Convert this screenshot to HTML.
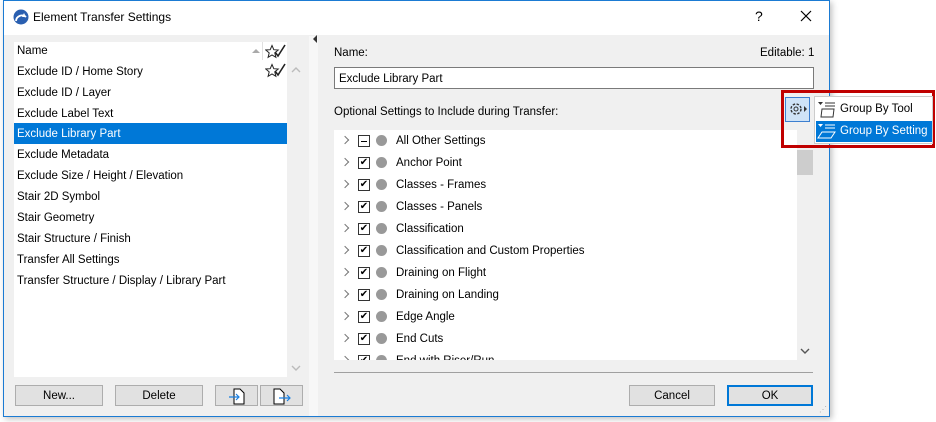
<!DOCTYPE html>
<html><head><style>
*{margin:0;padding:0;box-sizing:border-box}
body{width:936px;height:422px;background:#fff;font-family:"Liberation Sans",sans-serif;font-size:11.5px;color:#000;position:relative;overflow:hidden}
.a{position:absolute}
.dlg{left:3px;top:0;width:827px;height:417px;border:1px solid #1b7bd3;background:#f0f0f0;box-shadow:2px 2px 6px rgba(0,0,0,.25)}
.title{left:4px;top:1px;width:825px;height:34px;background:#fff}
.row{position:absolute;left:0;width:273px;height:21px;line-height:23px;padding-left:3px}
.btn{position:absolute;background:#e1e1e1;border:1px solid #adadad;text-align:center;line-height:21px;height:21px}
.tr{position:absolute;left:0;height:22px;width:460px}
.tr .chev{position:absolute;left:8px;top:7px;width:6px;height:6px;border-right:1.5px solid #777;border-bottom:1.5px solid #777;transform:rotate(-45deg)}
.tr .cb{position:absolute;left:24px;top:5px;width:12px;height:12px;border:1px solid #333;background:#fff;font-size:10px;line-height:10px;text-align:center}
.tr .dot{position:absolute;left:42px;top:5px;width:11px;height:11px;border-radius:50%;background:#999}
.tr .t{position:absolute;left:62px;top:5px}
</style></head><body>
<div class="a dlg"></div>
<div class="a title"></div>
<svg class="a" style="left:13px;top:9px" width="16" height="16"><circle cx="8" cy="8" r="7.5" fill="#2a5fb0"/><path d="M3 12 A6 6 0 0 1 13 8" stroke="#fff" stroke-width="1.8" fill="none"/><path d="M11 4 L13 8 L9 8" fill="#fff"/></svg>
<div class="a" style="left:33px;top:10px;font-size:12px">Element Transfer Settings</div>
<div class="a" style="left:755px;top:8px;font-size:14px">?</div>
<svg class="a" style="left:800px;top:10px" width="12" height="12"><path d="M1 1L11 11M11 1L1 11" stroke="#000" stroke-width="1.2"/></svg>

<div class="a" style="left:309px;top:36px;width:9px;height:380px;background:#f7f7f7"></div>
<div class="a" style="left:313px;top:35px;width:0;height:0;border-top:4px solid transparent;border-bottom:4px solid transparent;border-right:4px solid #333"></div>

<!-- list -->
<div class="a" style="left:14px;top:42px;width:273px;height:335px;background:#fff">
<div class="row" style="top:-2px">Name</div>
<div class="row" style="top:19px">Exclude ID / Home Story</div>
<div class="row" style="top:40px">Exclude ID / Layer</div>
<div class="row" style="top:61px">Exclude Label Text</div>
<div class="row" style="top:81px;background:#0078d7;color:#fff">Exclude Library Part</div>
<div class="row" style="top:102px">Exclude Metadata</div>
<div class="row" style="top:123px">Exclude Size / Height / Elevation</div>
<div class="row" style="top:144px">Stair 2D Symbol</div>
<div class="row" style="top:165px">Stair Geometry</div>
<div class="row" style="top:186px">Stair Structure / Finish</div>
<div class="row" style="top:207px">Transfer All Settings</div>
<div class="row" style="top:228px">Transfer Structure / Display / Library Part</div>
</div>
<div class="a" style="left:262px;top:42px;width:1px;height:18px;background:#e0e0e0"></div>
<div class="a" style="left:252px;top:49px;width:0;height:0;border-left:4px solid transparent;border-right:4px solid transparent;border-bottom:4px solid #aaa"></div>
<svg class="a" style="left:265px;top:44px" width="22" height="16"><path d="M7 1.5l1.8 4.2 4.4.3-3.4 2.9 1.1 4.4L7 11l-3.9 2.3 1.1-4.4L.8 6l4.4-.3z" fill="none" stroke="#222"/><path d="M10 8l3 4 7-11" fill="none" stroke="#222" stroke-width="1.6"/></svg>
<svg class="a" style="left:265px;top:63px" width="22" height="16"><path d="M7 1.5l1.8 4.2 4.4.3-3.4 2.9 1.1 4.4L7 11l-3.9 2.3 1.1-4.4L.8 6l4.4-.3z" fill="none" stroke="#222"/><path d="M10 8l3 4 7-11" fill="none" stroke="#222" stroke-width="1.6"/></svg>
<svg class="a" style="left:291px;top:67px" width="10" height="6"><path d="M1 5l4-4 4 4" fill="none" stroke="#bbb" stroke-width="1.4"/></svg>
<svg class="a" style="left:291px;top:365px" width="10" height="6"><path d="M1 1l4 4 4-4" fill="none" stroke="#bbb" stroke-width="1.4"/></svg>

<div class="btn" style="left:15px;top:385px;width:88px">New...</div>
<div class="btn" style="left:115px;top:385px;width:88px">Delete</div>
<div class="btn" style="left:215px;top:385px;width:43px"><svg width="20" height="18" style="margin-top:1px"><path d="M7 2h6l4 4v11H7z" fill="#fff" stroke="#000"/><path d="M2 10h10M9 7l3 3-3 3" stroke="#1a7fe0" fill="none" stroke-width="1.2"/></svg></div>
<div class="btn" style="left:260px;top:385px;width:43px"><svg width="22" height="18" style="margin-top:1px"><path d="M3 2h6l4 4v11H3z" fill="#fff" stroke="#000"/><path d="M8 11h11M16 8l3 3-3 3" stroke="#1a7fe0" fill="none" stroke-width="1.2"/></svg></div>

<!-- right -->
<div class="a" style="left:334px;top:47px">Name:</div>
<div class="a" style="left:760px;top:47px">Editable: 1</div>
<div class="a" style="left:334px;top:67px;width:480px;height:22px;background:#fff;border:1px solid #7a7a7a;padding:5px 4px 0">Exclude Library Part</div>
<div class="a" style="left:334px;top:106px">Optional Settings to Include during Transfer:</div>
<div class="a" style="left:334px;top:130px;width:463px;height:230px;background:#fff;overflow:hidden">
<div class="tr" style="top:0"><span class="chev"></span><span class="cb"><span class="a" style="left:2px;top:4.5px;width:6px;height:1px;background:#000"></span></span><span class="dot"></span><span class="t">All Other Settings</span></div>
<div class="tr" style="top:22px"><span class="chev"></span><span class="cb">✔</span><span class="dot"></span><span class="t">Anchor Point</span></div>
<div class="tr" style="top:44px"><span class="chev"></span><span class="cb">✔</span><span class="dot"></span><span class="t">Classes - Frames</span></div>
<div class="tr" style="top:66px"><span class="chev"></span><span class="cb">✔</span><span class="dot"></span><span class="t">Classes - Panels</span></div>
<div class="tr" style="top:88px"><span class="chev"></span><span class="cb">✔</span><span class="dot"></span><span class="t">Classification</span></div>
<div class="tr" style="top:110px"><span class="chev"></span><span class="cb">✔</span><span class="dot"></span><span class="t">Classification and Custom Properties</span></div>
<div class="tr" style="top:132px"><span class="chev"></span><span class="cb">✔</span><span class="dot"></span><span class="t">Draining on Flight</span></div>
<div class="tr" style="top:154px"><span class="chev"></span><span class="cb">✔</span><span class="dot"></span><span class="t">Draining on Landing</span></div>
<div class="tr" style="top:176px"><span class="chev"></span><span class="cb">✔</span><span class="dot"></span><span class="t">Edge Angle</span></div>
<div class="tr" style="top:198px"><span class="chev"></span><span class="cb">✔</span><span class="dot"></span><span class="t">End Cuts</span></div>
<div class="tr" style="top:220px"><span class="chev"></span><span class="cb">✔</span><span class="dot"></span><span class="t">End with Riser/Run</span></div>
</div>
<div class="a" style="left:797px;top:150px;width:16px;height:25px;background:#cdcdcd"></div>
<svg class="a" style="left:800px;top:348px" width="10" height="6"><path d="M1 1l4 4 4-4" fill="none" stroke="#555" stroke-width="1.4"/></svg>
<div class="a" style="left:334px;top:372px;width:479px;height:1px;background:#a0a0a0"></div>
<div class="btn" style="left:629px;top:385px;width:86px">Cancel</div>
<div class="btn" style="left:727px;top:385px;width:86px;border:2px solid #0078d7;line-height:19px">OK</div>

<!-- popup -->
<div class="a" style="left:781px;top:90px;width:154px;height:58px;border:3px solid #c00000"></div>
<div class="a" style="left:785px;top:97px;width:25px;height:25px;border:1px solid #3c7fd0;background:#cfe3f7"><svg width="23" height="23"><circle cx="10" cy="11" r="5" fill="none" stroke="#333" stroke-width="1.4" stroke-dasharray="2.5 1.5"/><circle cx="10" cy="11" r="2" fill="none" stroke="#333"/><path d="M18 8l3 3-3 3z" fill="#333"/></svg></div>
<div class="a" style="left:814px;top:96px;width:119px;height:48px;background:#fff;border:1px solid #ccc"></div>
<div class="a" style="left:816px;top:121px;width:116px;height:21px;background:#0078d7"></div>
<svg class="a" style="left:817px;top:100px" width="20" height="18"><path d="M1 2h5l-2.5 3z" fill="#333"/><path d="M8 3h10M8 6h10" stroke="#333"/><path d="M5 9h12l-1 8H4z" fill="none" stroke="#333"/></svg>
<svg class="a" style="left:817px;top:122px" width="20" height="18"><path d="M1 2h5l-2.5 3z" fill="#fff"/><path d="M8 3h10M8 6h10" stroke="#fff"/><path d="M5 10h13l-4 6H1z" fill="none" stroke="#fff"/></svg>
<div class="a" style="left:840px;top:103px">Group By Tool</div>
<div class="a" style="left:840px;top:125px;color:#fff">Group By Setting</div>
<div class="a" style="left:819px;top:405px;color:#aaa;font-size:8px">⋰</div>
</body></html>
